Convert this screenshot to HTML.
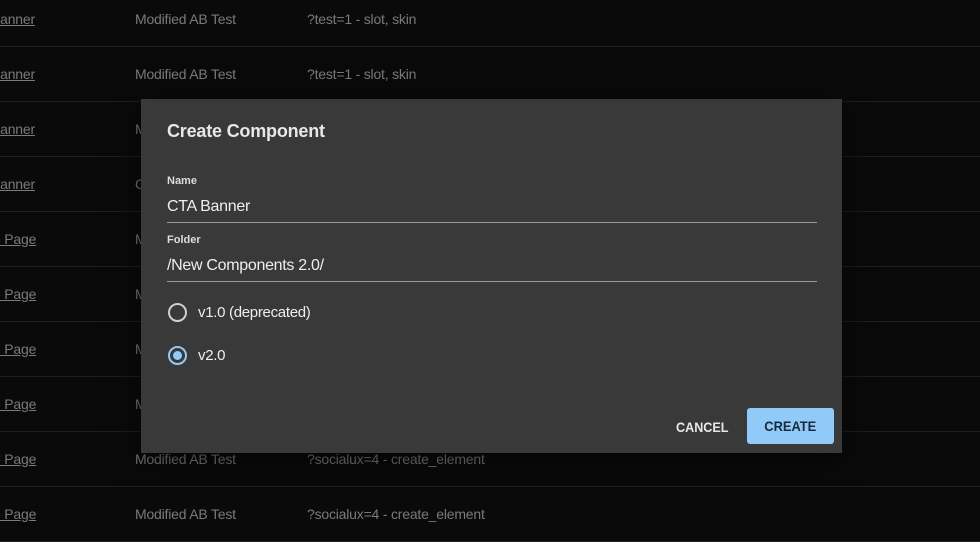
<!DOCTYPE html>
<html><head><style>
body{margin:0;width:980px;height:540px;background:#0a0a0a;font-family:"Liberation Sans",sans-serif;overflow:hidden;position:relative}
.row{position:absolute;left:0;width:980px;height:55px;border-bottom:1px solid #1e1e1e;color:#7a7a7a;font-size:14px;letter-spacing:-0.2px}
.row span{position:absolute;top:1px;line-height:55px}
.c1{left:-9px;text-decoration:underline}
.c1.b{left:-9px}
.c1.p{left:-7px}
.c2{left:135px}.c3{left:307px}
.dlg{position:absolute;left:141px;top:99px;width:701px;height:354px;background:#393939;box-shadow:0 8px 30px rgba(0,0,0,.6);color:#e8e8e8}
.abs{position:absolute}
.lbl{font-size:11px;font-weight:bold;color:#ddd}
.inp{font-size:16px;color:#eee;letter-spacing:-0.3px}
.line{height:1px;background:#9a9a9a;left:26px;width:650px}
.radio{width:15px;height:15px;border:2px solid #cfcfcf;border-radius:50%}
</style></head><body>
<div class="row" style="top:-9px"><span class="c1 b">Banner</span><span class="c2">Modified AB Test</span><span class="c3">?test=1 - slot, skin</span></div>
<div class="row" style="top:46px"><span class="c1 b">Banner</span><span class="c2">Modified AB Test</span><span class="c3">?test=1 - slot, skin</span></div>
<div class="row" style="top:101px"><span class="c1 b">Banner</span><span class="c2">Modified AB Test</span></div>
<div class="row" style="top:156px"><span class="c1 b">Banner</span><span class="c2">Control</span></div>
<div class="row" style="top:211px"><span class="c1 p">e Page</span><span class="c2">Modified</span></div>
<div class="row" style="top:266px"><span class="c1 p">e Page</span><span class="c2">Modified</span></div>
<div class="row" style="top:321px"><span class="c1 p">e Page</span><span class="c2">Modified</span></div>
<div class="row" style="top:376px"><span class="c1 p">e Page</span><span class="c2">Modified</span></div>
<div class="row" style="top:431px"><span class="c1 p">e Page</span><span class="c2">Modified AB Test</span><span class="c3">?socialux=4 - create_element</span></div>
<div class="row" style="top:486px"><span class="c1 p">e Page</span><span class="c2">Modified AB Test</span><span class="c3">?socialux=4 - create_element</span></div>
<div class="dlg">
<div class="abs" style="left:26px;top:22px;font-size:18px;font-weight:bold;letter-spacing:-0.2px">Create Component</div>
<div class="abs lbl" style="left:26px;top:76px">Name</div>
<div class="abs inp" style="left:26px;top:99px">CTA Banner</div>
<div class="abs line" style="top:123px"></div>
<div class="abs lbl" style="left:26px;top:135px">Folder</div>
<div class="abs inp" style="left:26px;top:158px">/New Components 2.0/</div>
<div class="abs line" style="top:182px"></div>
<div class="abs radio" style="left:27px;top:204px"></div>
<div class="abs inp" style="left:57px;top:205px;font-size:15px">v1.0 (deprecated)</div>
<div class="abs radio" style="left:27px;top:247px;border-color:#90caf9"><div style="position:absolute;left:3px;top:3px;width:9px;height:9px;border-radius:50%;background:#90caf9"></div></div>
<div class="abs inp" style="left:57px;top:248px;font-size:15px">v2.0</div>
<div class="abs" style="left:535px;top:320px;font-size:14px;font-weight:bold;transform:scaleX(0.9);transform-origin:left">CANCEL</div>
<div class="abs" style="left:606px;top:309px;width:87px;height:36px;background:#90caf9;border-radius:3px;color:#1a2a3a;font-size:14px;line-height:37px;text-align:center"><span style="display:inline-block;font-weight:bold;transform:scaleX(0.92)">CREATE</span></div>
</div>
</body></html>
